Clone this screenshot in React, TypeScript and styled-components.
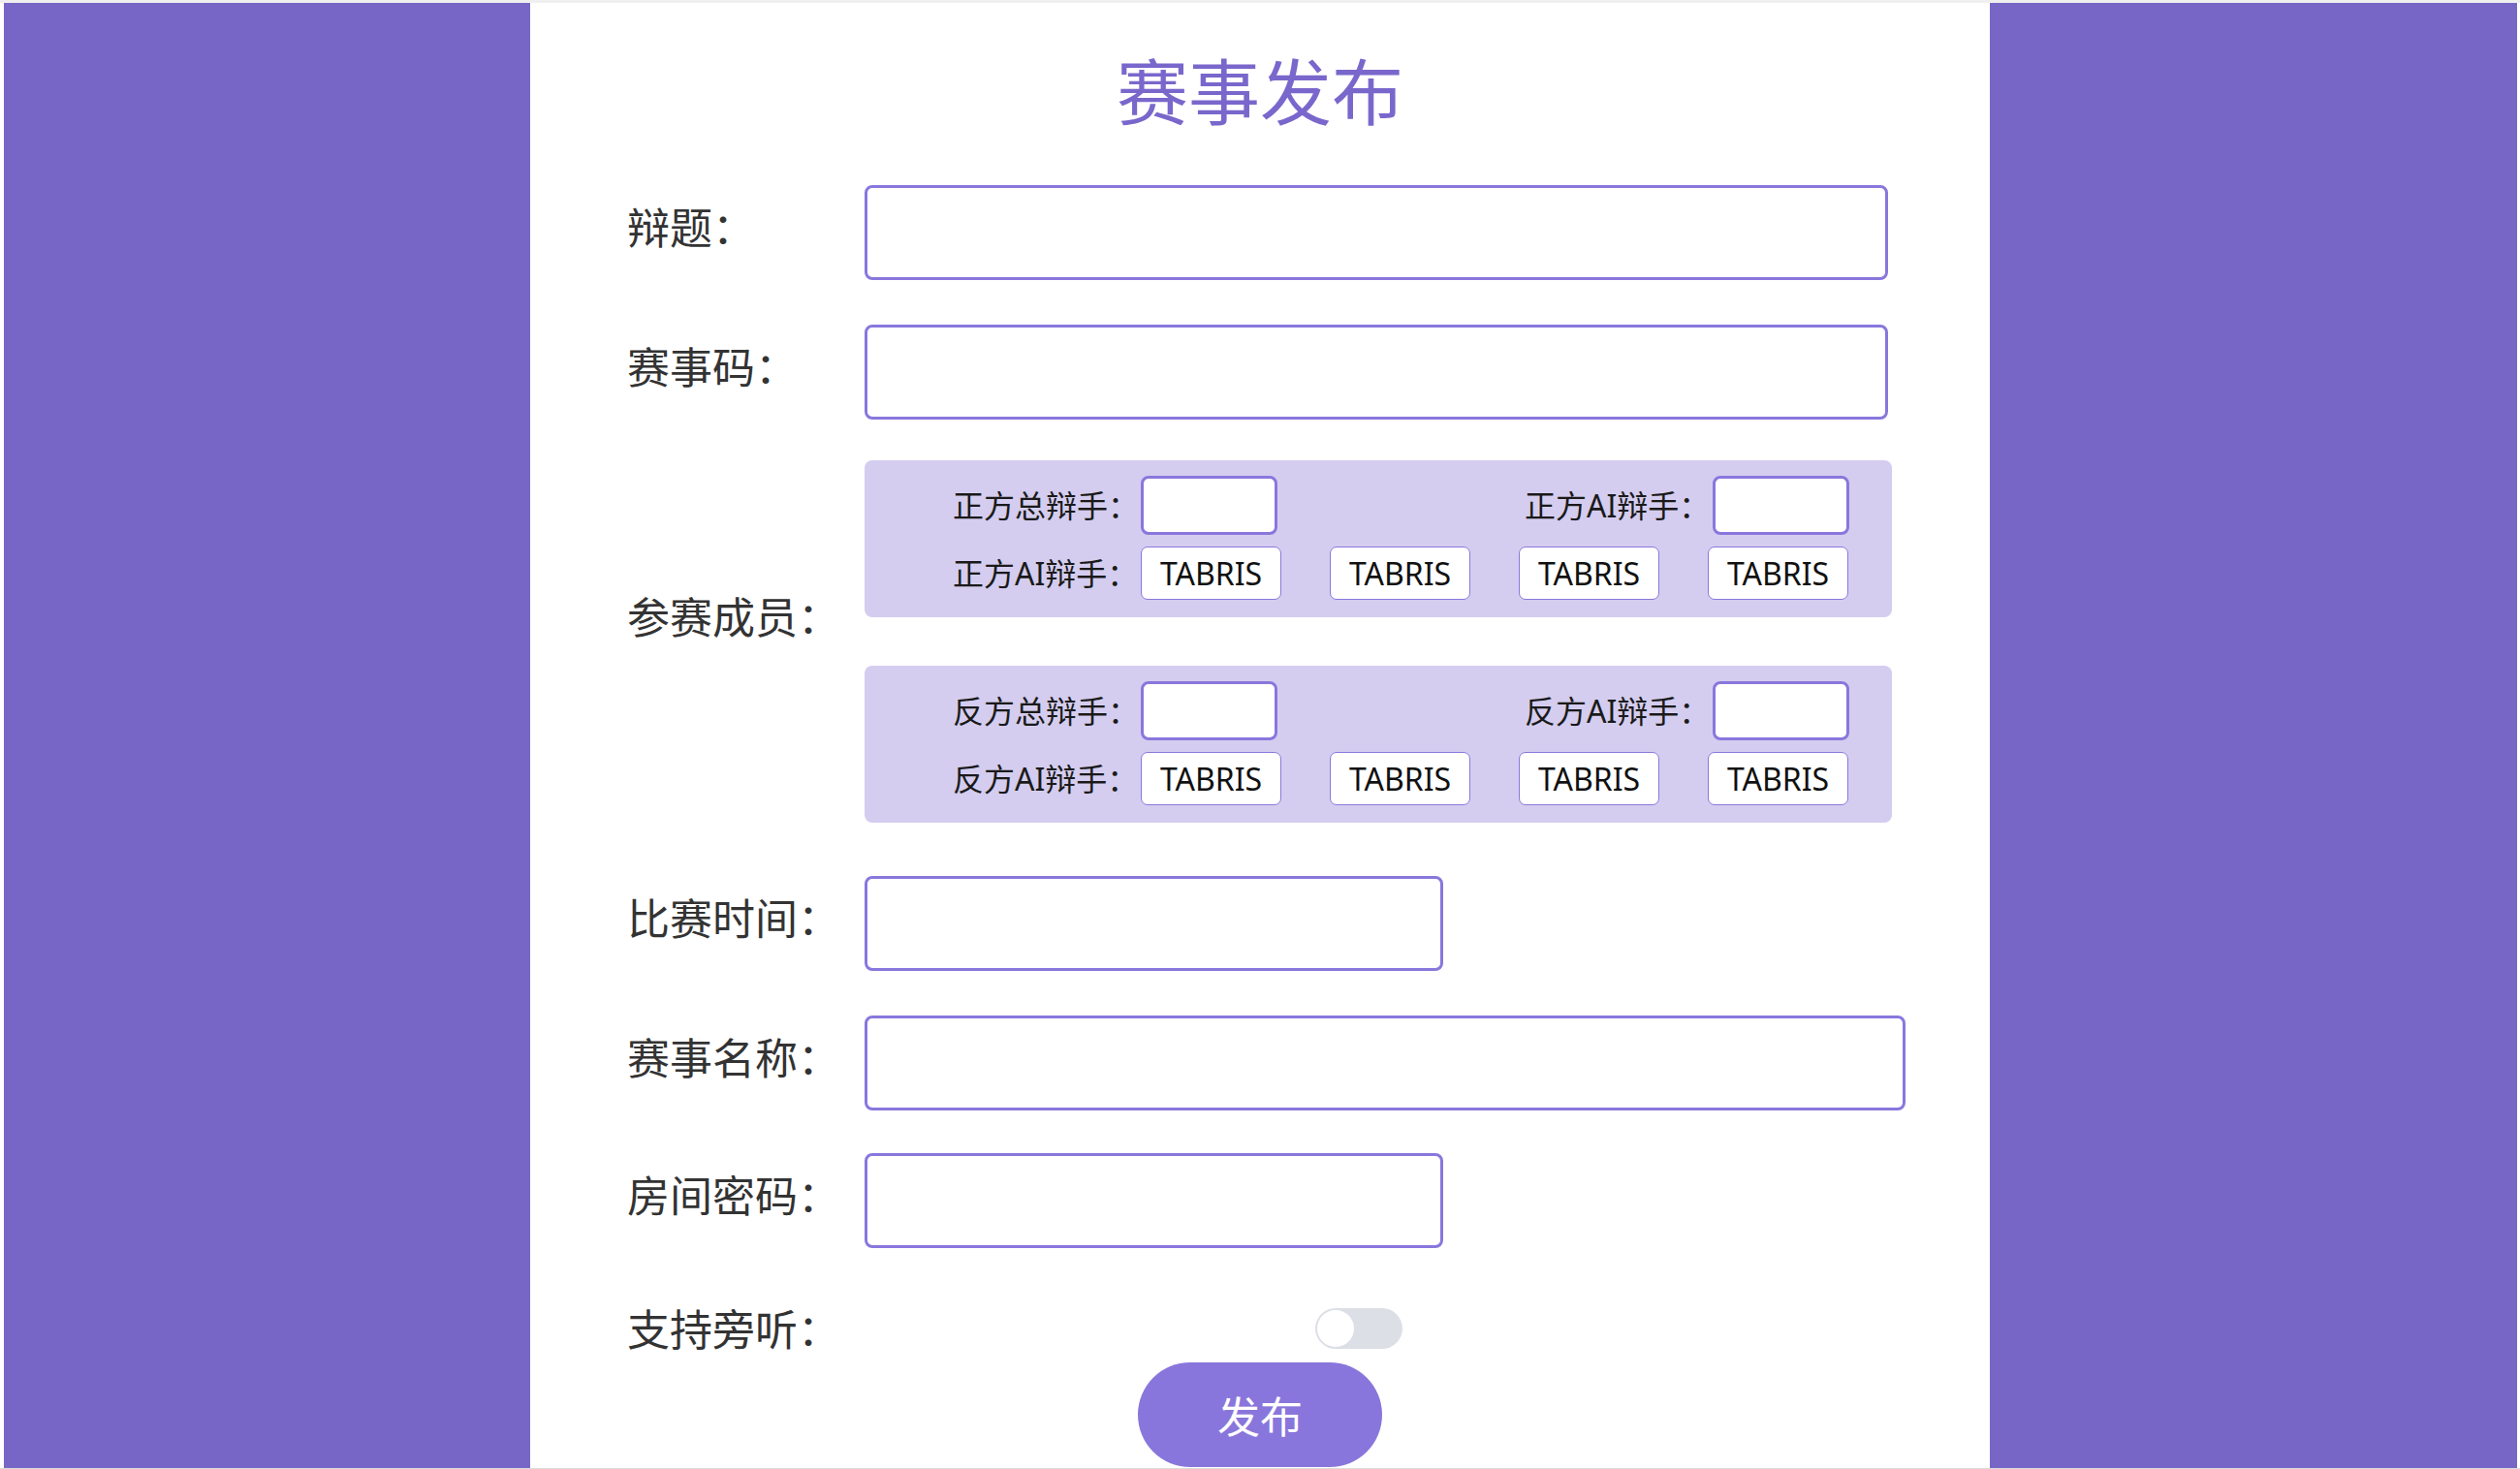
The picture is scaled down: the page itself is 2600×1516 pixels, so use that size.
import React from "react";
import styled, { createGlobalStyle } from "styled-components";

const GlobalStyle = createGlobalStyle`
  html, body { margin: 0; padding: 0; background: #ffffff; }
  body { font-family: "Noto Sans", "Noto Sans CJK SC", sans-serif; }
  *, *::before, *::after { box-sizing: border-box; }
`;

const Page = styled.div`
  height: 1516px;
  border-top: 3px solid #efefef;
  border-bottom: 1px solid #dcdcdc;
  padding: 0 3px 0 4px;
  display: grid;
  grid-template-columns: 543px 1506px 1fr;
  overflow: hidden;
`;

const Side = styled.aside`
  background: #7766c6;
`;

const Panel = styled.main`
  background: #ffffff;
  overflow: hidden;
  padding-top: 51px;
  display: flex;
  flex-direction: column;
`;

const Title = styled.h1`
  margin: 0;
  height: 74px;
  font-size: 74px;
  line-height: 74px;
  font-weight: 400;
  text-align: center;
  color: #7a67cc;
  font-family: "Noto Sans CJK SC", sans-serif;
`;

const Form = styled.form`
  display: flex;
  flex-direction: column;
  padding-left: 100px;
`;

const Row = styled.div<{ $top: number }>`
  display: grid;
  grid-template-columns: 245px auto;
  align-items: center;
  justify-items: start;
  margin-top: ${(p) => p.$top}px;
`;

const Label = styled.label<{ $lift?: number }>`
  font-size: 44px;
  line-height: 1;
  color: #333333;
  margin: ${(p) => -(p.$lift ?? 7)}px 0 ${(p) => p.$lift ?? 7}px;
  font-family: "Noto Sans CJK SC", sans-serif;
  white-space: nowrap;
`;

const MembersLabel = styled(Label)`
  align-self: start;
  margin: 138px 0 0;
`;

const TextInput = styled.input<{ $w: number }>`
  width: ${(p) => p.$w}px;
  height: 98px;
  border: 3px solid #8977dd;
  border-radius: 8px;
  background: #ffffff;
  outline: none;
  padding: 0 16px;
  font-size: 32px;
`;

const Members = styled.div`
  display: flex;
  flex-direction: column;
  gap: 50px;
`;

const MemberBox = styled.div`
  width: 1060px;
  height: 162px;
  background: #d4cdef;
  border-radius: 8px;
  padding: 16px 44px 18px 91px;
  display: flex;
  flex-direction: column;
  gap: 12px;
`;

const BoxRow = styled.div<{ $spread?: boolean }>`
  display: flex;
  align-items: center;
  justify-content: ${(p) => (p.$spread ? "space-between" : "flex-start")};
`;

const Field = styled.div`
  display: flex;
  align-items: center;
`;

const SmallLabel = styled.span`
  min-width: 194px;
  font-size: 32px;
  line-height: 1;
  color: #1a1a1a;
  white-space: nowrap;
  font-family: "Noto Sans", "Noto Sans CJK SC", sans-serif;
`;

const SmallInput = styled.input`
  width: 141px;
  height: 61px;
  border: 3px solid #8977dd;
  border-radius: 8px;
  background: #ffffff;
  outline: none;
`;

const Tags = styled.div`
  display: flex;
  gap: 50px;
`;

const Tag = styled.button`
  width: 145px;
  height: 55px;
  border: 1px solid #8977dd;
  border-radius: 7px;
  background: #ffffff;
  color: #111111;
  font-size: 32px;
  line-height: 1;
  padding: 0;
  font-family: "Noto Sans", sans-serif;
`;

const SwitchTrack = styled.span`
  position: relative;
  display: block;
  width: 90px;
  height: 42px;
  margin-left: 465px;
  border-radius: 21px;
  background: #dcdfe6;
`;

const SwitchKnob = styled.span`
  position: absolute;
  left: 2px;
  top: 2px;
  width: 38px;
  height: 38px;
  border-radius: 50%;
  background: #ffffff;
`;

const Submit = styled.button`
  align-self: center;
  margin-top: 13px;
  width: 252px;
  height: 108px;
  flex-shrink: 0;
  border: none;
  border-radius: 54px;
  background: #8976dc;
  color: #ffffff;
  font-size: 44px;
  line-height: 1;
  font-family: "Noto Sans CJK SC", sans-serif;
`;

type SideProps = { side: string };

function MemberGroup({ side }: SideProps) {
  return (
    <MemberBox>
      <BoxRow $spread>
        <Field>
          <SmallLabel>{side}总辩手：</SmallLabel>
          <SmallInput />
        </Field>
        <Field>
          <SmallLabel>{side}AI辩手：</SmallLabel>
          <SmallInput />
        </Field>
      </BoxRow>
      <BoxRow>
        <SmallLabel>{side}AI辩手：</SmallLabel>
        <Tags>
          {[0, 1, 2, 3].map((i) => (
            <Tag key={i} type="button">TABRIS</Tag>
          ))}
        </Tags>
      </BoxRow>
    </MemberBox>
  );
}

export default function App() {
  return (
    <>
      <GlobalStyle />
      <Page>
        <Side />
        <Panel>
          <Title>赛事发布</Title>
          <Form>
            <Row $top={63}>
              <Label>辩题：</Label>
              <TextInput $w={1056} />
            </Row>
            <Row $top={46}>
              <Label>赛事码：</Label>
              <TextInput $w={1056} />
            </Row>
            <Row $top={42}>
              <MembersLabel>参赛成员：</MembersLabel>
              <Members>
                <MemberGroup side="正方" />
                <MemberGroup side="反方" />
              </Members>
            </Row>
            <Row $top={55}>
              <Label>比赛时间：</Label>
              <TextInput $w={597} />
            </Row>
            <Row $top={46}>
              <Label>赛事名称：</Label>
              <TextInput $w={1074} />
            </Row>
            <Row $top={44}>
              <Label>房间密码：</Label>
              <TextInput $w={597} />
            </Row>
            <Row $top={61}>
              <Label $lift={1}>支持旁听：</Label>
              <SwitchTrack>
                <SwitchKnob />
              </SwitchTrack>
            </Row>
          </Form>
          <Submit type="button">发布</Submit>
        </Panel>
        <Side />
      </Page>
    </>
  );
}
